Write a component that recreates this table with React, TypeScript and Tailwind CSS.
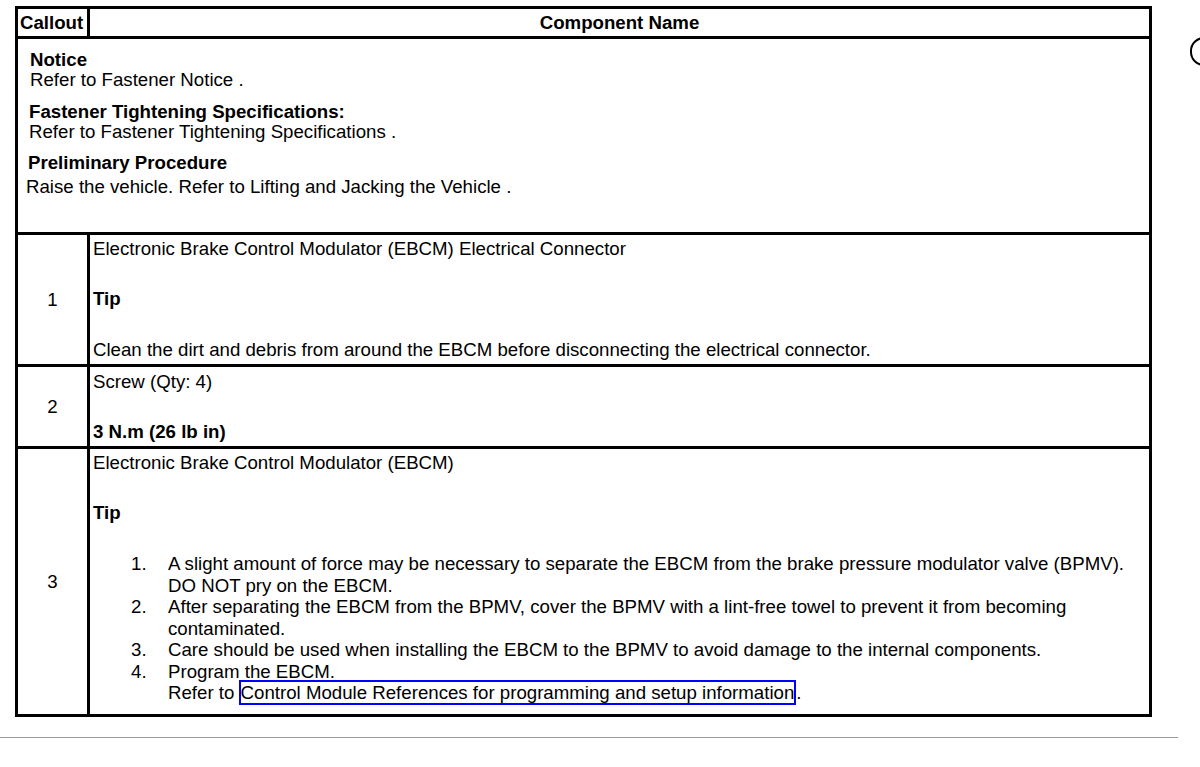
import React from 'react';

type Step = { n: string; lines: React.ReactNode[] };

const STEPS: Step[] = [
  {
    n: '1.',
    lines: [
      'A slight amount of force may be necessary to separate the EBCM from the brake pressure modulator valve (BPMV).',
      'DO NOT pry on the EBCM.',
    ],
  },
  {
    n: '2.',
    lines: [
      'After separating the EBCM from the BPMV, cover the BPMV with a lint-free towel to prevent it from becoming',
      'contaminated.',
    ],
  },
  {
    n: '3.',
    lines: ['Care should be used when installing the EBCM to the BPMV to avoid damage to the internal components.'],
  },
  {
    n: '4.',
    lines: [
      'Program the EBCM.',
      <span key="ref">
        Refer to{' '}
        <span className="border-2 border-[#0000ff] -ml-[1px]">Control Module References for programming and setup information</span>.
      </span>,
    ],
  },
];

function Row({ callout, children, className = '' }: { callout: string; children: React.ReactNode; className?: string }) {
  return (
    <div className="flex border-t-[3px] border-black">
      <div className="w-[72px] shrink-0 border-r-[3px] border-black flex items-center justify-center">{callout}</div>
      <div className={`flex-1 pl-[3px] ${className}`}>{children}</div>
    </div>
  );
}

export default function App() {
  return (
    <div
      className="relative w-[1200px] h-[767px] overflow-hidden bg-white text-black text-[18.67px] leading-[21.5px]"
      style={{ fontFamily: '"Liberation Sans", Arial, sans-serif' }}
    >
      <div className="pt-[6px] pl-[15px]">
        <div className="w-[1137px] border-[3px] border-black">
          {/* header */}
          <div className="flex h-[27px] items-center font-bold">
            <div className="w-[72px] shrink-0 h-full border-r-[3px] border-black flex items-center pl-[2px]">Callout</div>
            <div className="flex-1 text-center">Component Name</div>
          </div>

          {/* notice block */}
          <div className="border-t-[3px] border-black pt-[11px] pb-[35px] leading-[20px]">
            <div className="pl-[12px]">
              <div className="font-bold">Notice</div>
              <div>Refer to Fastener Notice .</div>
            </div>
            <div className="pl-[11px] mt-[12px]">
              <div className="font-bold">Fastener Tightening Specifications:</div>
              <div>Refer to Fastener Tightening Specifications .</div>
            </div>
            <div className="pl-[10px] mt-[11px] font-bold">Preliminary Procedure</div>
            <div className="pl-[8px] mt-[4px]">Raise the vehicle. Refer to Lifting and Jacking the Vehicle .</div>
          </div>

          <Row callout="1" className="pt-[3px] pb-[3.5px]">
            <div>Electronic Brake Control Modulator (EBCM) Electrical Connector</div>
            <div className="mt-[28.5px] font-bold">Tip</div>
            <div className="mt-[29.5px]">Clean the dirt and debris from around the EBCM before disconnecting the electrical connector.</div>
          </Row>

          <Row callout="2" className="pt-[4px] pb-[3.5px]">
            <div>Screw (Qty: 4)</div>
            <div className="mt-[28.5px] font-bold">3 N.m (26 lb in)</div>
          </Row>

          <Row callout="3" className="pt-[3px] pb-[10.5px]">
            <div>Electronic Brake Control Modulator (EBCM)</div>
            <div className="mt-[28.5px] font-bold">Tip</div>
            <div className="mt-[29.5px] ml-[38px]">
              {STEPS.map(s => (
                <div key={s.n} className="flex">
                  <span className="w-[37px] shrink-0">{s.n}</span>
                  <div>
                    {s.lines.map((l, i) => (
                      <div key={i} className="whitespace-nowrap">{l}</div>
                    ))}
                  </div>
                </div>
              ))}
            </div>
          </Row>
        </div>
      </div>

      <div className="mt-[20px] w-[1178px] h-px bg-[#9a9a9a]" />

      {/* figure callout cut off at the right edge */}
      <div className="absolute left-[1190px] top-[37px] w-[28px] h-[29px] rounded-full border-2 border-black" />
    </div>
  );
}
